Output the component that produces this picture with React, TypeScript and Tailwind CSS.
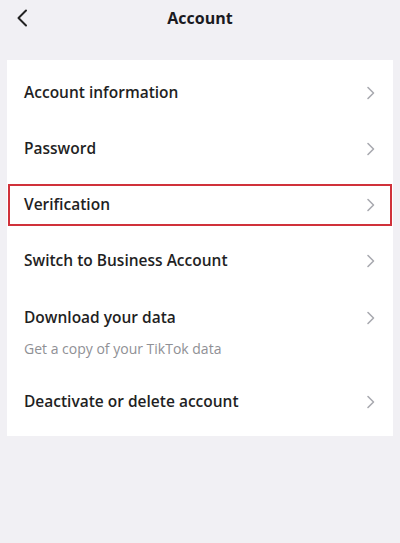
import React from "react";

function Chevron() {
  return (
    <svg width="10" height="14" viewBox="0 0 10 14" fill="none" className="shrink-0">
      <path d="M2 1.5 L7.5 7 L2 12.5" stroke="#a9aab0" strokeWidth="1.6" strokeLinecap="round" strokeLinejoin="round" />
    </svg>
  );
}

function Row({ label, sub, highlight }: { label: string; sub?: string; highlight?: boolean }) {
  return (
    <div className={`relative flex flex-col justify-center px-[17px] ${sub ? "h-[85px] justify-start pt-[17px]" : "h-14"}`}>
      <div className="flex items-center justify-between">
        <span className="text-[15.5px] font-semibold text-[#1f1f24]">{label}</span>
        <Chevron />
      </div>
      {sub && <span className="mt-[9px] text-[14px] text-[#8f9095]">{sub}</span>}
      {highlight && (
        <div className="pointer-events-none absolute left-[1px] right-[1px] top-[7px] bottom-[7px] border-2 border-[#d0313a]" />
      )}
    </div>
  );
}

export default function App() {
  return (
    <div
      className="min-h-[543px] w-full bg-[#f1f0f4]"
      style={{ fontFamily: "'Open Sans', 'Liberation Sans', Arial, sans-serif" }}
    >
      <div className="relative flex h-9 items-center justify-center">
        <svg width="14" height="18" viewBox="0 0 14 18" fill="none" className="absolute left-[15px] top-[9px]">
          <path d="M11 1.5 L3.5 9 L11 16.5" stroke="#222" strokeWidth="2" strokeLinecap="round" strokeLinejoin="round" />
        </svg>
        <span className="text-[16px] font-bold text-[#1a1a1f]">Account</span>
      </div>
      <div className="mx-[7px] mt-[24px] bg-white pb-[6px] pt-[5px]">
        <Row label="Account information" />
        <Row label="Password" />
        <Row label="Verification" highlight />
        <Row label="Switch to Business Account" />
        <Row label="Download your data" sub="Get a copy of your TikTok data" />
        <Row label="Deactivate or delete account" />
      </div>
    </div>
  );
}
